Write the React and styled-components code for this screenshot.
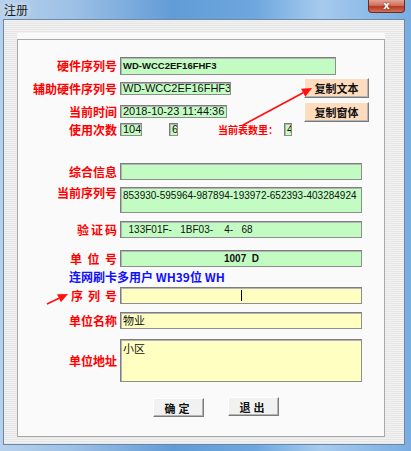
import React from 'react'
import styled, { createGlobalStyle } from 'styled-components'

const GlobalStyle = createGlobalStyle`
  html, body {
    margin: 0;
    padding: 0;
    background: #ffffff;
  }
  body {
    font-family: 'Liberation Sans', 'Noto Sans CJK SC', sans-serif;
  }
`

const cjk = `'Noto Sans CJK SC', 'Liberation Sans', sans-serif`

const Window = styled.div`
  position: relative;
  width: 411px;
  height: 451px;
  box-sizing: border-box;
  display: flex;
  flex-direction: column;
  padding: 0 6px 6px 3px;
  background: linear-gradient(
    90deg,
    #b7d1ec 0%,
    #9cc0e6 18%,
    #629cd7 42%,
    #6ea7df 62%,
    #a6cbee 78%,
    #79ade2 100%
  );
  overflow: hidden;
`

const TitleBar = styled.div`
  height: 19px;
  display: flex;
  align-items: flex-start;
  justify-content: space-between;
`

const TitleText = styled.span`
  font-family: ${cjk};
  font-size: 12px;
  line-height: 19px;
  color: #1a1a1a;
  margin-left: 1px;
  text-shadow: 0 0 6px rgba(255, 255, 255, 0.9);
`

const CloseButton = styled.div`
  width: 37px;
  height: 13px;
  box-sizing: border-box;
  border: 1px solid #6b2a22;
  border-top: none;
  border-radius: 0 0 4px 4px;
  background: linear-gradient(#e4a394 0%, #d0705c 45%, #b83a22 55%, #d27058 100%);
  display: flex;
  align-items: center;
  justify-content: center;
  color: #ffffff;
  font-family: 'DejaVu Sans', sans-serif;
  font-weight: bold;
  font-size: 10px;
  line-height: 1;
  text-shadow: 0 0 2px #5a1a10;
`

const Client = styled.div`
  flex: 1;
  display: flex;
  flex-direction: column;
  border: 1px solid #6d87a6;
  background: repeating-linear-gradient(
    180deg,
    #f2f2f2 0px,
    #f2f2f2 1px,
    #e6e6e6 1px,
    #e6e6e6 2px
  );
`

const Panel = styled.div`
  flex: 1;
  margin: 13px 19px 7px 13px;
  padding-top: 6px;
  background: #f9f9f9;
  display: flex;
  flex-direction: column;
`

const Frame = styled.div`
  flex: 1;
  border: 1px solid #a8a8a8;
  background: #fafafa;
  display: flex;
  flex-direction: column;
`

const Row = styled.div`
  display: flex;
  align-items: ${(p) => (p.$top ? 'flex-start' : 'center')};
  margin-top: ${(p) => p.$mt || 0}px;
`

const Label = styled.span`
  width: 99px;
  margin-right: 3px;
  flex: none;
  text-align: right;
  font-family: ${cjk};
  font-weight: bold;
  font-size: 12px;
  line-height: 12px;
  color: #ff0000;
  white-space: nowrap;
  letter-spacing: ${(p) => p.$spread || 0}px;
  & > span {
    letter-spacing: 0;
  }
`

const SmallLabel = styled.span`
  margin-left: ${(p) => p.$ml || 0}px;
  margin-right: 6px;
  font-family: ${cjk};
  font-weight: bold;
  font-size: 10px;
  line-height: 12px;
  color: #ff0000;
  white-space: nowrap;
`

const Field = styled.div`
  box-sizing: border-box;
  flex: none;
  width: ${(p) => p.$w}px;
  height: ${(p) => p.$h}px;
  margin-left: ${(p) => p.$ml || 0}px;
  background: ${(p) => (p.$yellow ? '#ffffc2' : '#c2fcc2')};
  border: 1px solid #7d7d7d;
  border-right-color: #8e8e8e;
  border-bottom-color: #8e8e8e;
  box-shadow: inset 1px 1px 0 #b4b4b4;
  display: flex;
  align-items: ${(p) => (p.$multi ? 'flex-start' : 'center')};
  justify-content: ${(p) => (p.$center ? 'center' : 'flex-start')};
  padding: ${(p) => (p.$multi ? '2px 1px 0 2px' : '0 1px 0 2px')};
  font-family: ${(p) => (p.$cjk ? cjk : `'Liberation Sans', sans-serif`)};
  font-size: ${(p) => p.$size || 11}px;
  font-weight: ${(p) => (p.$bold ? 'bold' : 'normal')};
  color: #111111;
  white-space: pre;
  overflow: hidden;
  line-height: 1.1;
`

const Caret = styled.span`
  display: inline-block;
  width: 1px;
  height: 11px;
  background: #000000;
  margin-left: ${(p) => p.$ml}px;
`

const Split = styled.div`
  display: flex;
  align-items: flex-start;
`

const LeftCol = styled.div`
  width: 286px;
  display: flex;
  flex-direction: column;
`

const RightCol = styled.div`
  display: flex;
  flex-direction: column;
  gap: 4px;
  padding-top: 3px;
`

const Button = styled.div`
  box-sizing: border-box;
  width: ${(p) => p.$w}px;
  height: ${(p) => p.$h}px;
  display: flex;
  align-items: center;
  justify-content: center;
  background: ${(p) => (p.$peach ? '#fedcbd' : '#f1f1f1')};
  border: 1px solid;
  border-color: #ffffff #7a7a7a #7a7a7a #ffffff;
  box-shadow: inset -1px -1px 0 #b4b4b4;
  font-family: ${cjk};
  font-weight: bold;
  font-size: 11px;
  color: #111111;
  letter-spacing: ${(p) => p.$spread || 0}px;
  white-space: nowrap;
  margin-top: ${(p) => p.$mt || 0}px;
`

const Note = styled.div`
  margin-top: ${(p) => p.$mt || 0}px;
  padding-left: 51px;
  font-family: ${cjk};
  font-weight: bold;
  font-size: 12px;
  line-height: 13px;
  color: #1010ff;
  white-space: nowrap;
`

const ButtonRow = styled.div`
  display: flex;
  align-items: flex-start;
  gap: 24px;
  margin-top: ${(p) => p.$mt || 0}px;
  padding-left: 135px;
`

const Arrows = styled.svg`
  position: absolute;
  left: 0;
  top: 0;
  pointer-events: none;
`

const Arrow = ({ x1, y1, x2, y2 }) => {
  const dx = x2 - x1
  const dy = y2 - y1
  const len = Math.hypot(dx, dy)
  const ux = dx / len
  const uy = dy / len
  const hl = 10
  const hw = 4.5
  const bx = x2 - ux * hl
  const by = y2 - uy * hl
  const p1 = `${bx - uy * hw},${by + ux * hw}`
  const p2 = `${bx + uy * hw},${by - ux * hw}`
  return (
    <g>
      <line x1={x1} y1={y1} x2={bx} y2={by} stroke="#ff1010" strokeWidth="1.6" />
      <polygon points={`${x2},${y2} ${p1} ${p2}`} fill="#ff1010" />
    </g>
  )
}

export default function App() {
  return (
    <>
      <GlobalStyle />
      <Window>
        <TitleBar>
          <TitleText>注册</TitleText>
          <CloseButton>x</CloseButton>
        </TitleBar>
        <Client>
          <Panel>
            <Frame>
              <Row $mt={17}>
                <Label>硬件序列号</Label>
                <Field $w={216} $h={18} $bold $size={9.5}>
                  WD-WCC2EF16FHF3
                </Field>
              </Row>

              <Split>
                <LeftCol>
                  <Row $mt={7}>
                    <Label>辅助硬件序列号</Label>
                    <Field $w={111} $h={13}>
                      WD-WCC2EF16FHF3
                    </Field>
                  </Row>
                  <Row $mt={10}>
                    <Label>当前时间</Label>
                    <Field $w={107} $h={13}>
                      2018-10-23 11:44:36
                    </Field>
                  </Row>
                  <Row $mt={5}>
                    <Label>使用次数</Label>
                    <Field $w={22} $h={13}>
                      104
                    </Field>
                    <Field $w={9} $h={13} $ml={27}>
                      6
                    </Field>
                    <SmallLabel $ml={40}>当前表数里：</SmallLabel>
                    <Field $w={8} $h={13}>
                      4
                    </Field>
                  </Row>
                </LeftCol>
                <RightCol>
                  <Button $peach $w={65} $h={20}>
                    复制文本
                  </Button>
                  <Button $peach $w={65} $h={20}>
                    复制窗体
                  </Button>
                </RightCol>
              </Split>

              <Row $mt={27}>
                <Label>综合信息</Label>
                <Field $w={242} $h={17} />
              </Row>
              <Row $mt={7} $top>
                <Label>当前序列号</Label>
                <Field $w={242} $h={26} $multi $size={10}>
                  853930-595964-987894-193972-652393-403284924
                </Field>
              </Row>
              <Row $mt={8}>
                <Label $spread={2}>
                  验证<span>码</span>
                </Label>
                <Field $w={242} $h={17} $size={10}>
                  {'  133F01F-   1BF03-    4-   68'}
                </Field>
              </Row>
              <Row $mt={12}>
                <Label $spread={5.5}>
                  单位<span>号</span>
                </Label>
                <Field $w={242} $h={17} $size={10} $bold $center>
                  1007  D
                </Field>
              </Row>
              <Note $mt={3}>连网刷卡多用户 WH39位 WH</Note>
              <Row $mt={4}>
                <Label $spread={5}>
                  序列<span>号</span>
                </Label>
                <Field $w={242} $h={17} $yellow>
                  <Caret $ml={118} />
                </Field>
              </Row>
              <Row $mt={8}>
                <Label>单位名称</Label>
                <Field $w={242} $h={17} $yellow $cjk $size={11}>
                  物业
                </Field>
              </Row>
              <Row $mt={10}>
                <Label>单位地址</Label>
                <Field $w={242} $h={43} $yellow $cjk $multi $size={11}>
                  小区
                </Field>
              </Row>
              <ButtonRow $mt={15}>
                <Button $w={51} $h={19} $mt={1} $spread={3}>
                  确定
                </Button>
                <Button $w={51} $h={19} $spread={3}>
                  退出
                </Button>
              </ButtonRow>
            </Frame>
          </Panel>
        </Client>
        <Arrows width="411" height="451" viewBox="0 0 411 451">
          <Arrow x1={243} y1={125} x2={312} y2={88} />
          <Arrow x1={47} y1={304} x2={68} y2={294} />
        </Arrows>
      </Window>
    </>
  )
}
